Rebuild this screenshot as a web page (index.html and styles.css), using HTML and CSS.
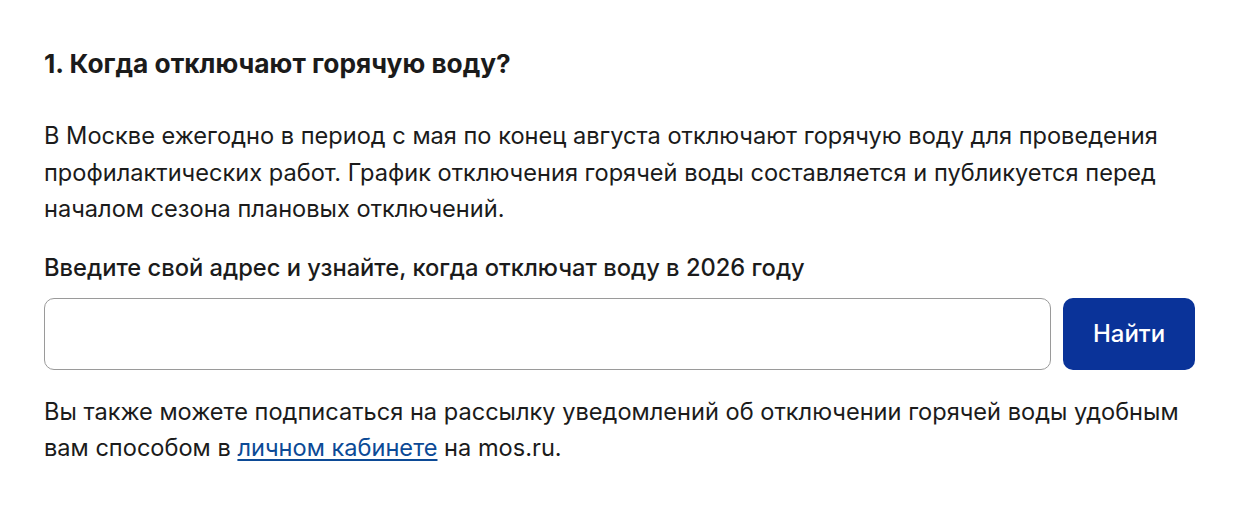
FILE: index.html
```html
<!DOCTYPE html>
<html lang="ru">
<head>
<meta charset="utf-8">
<link rel="stylesheet" href="styles.css">
</head>
<body>
<div class="page">
  <h2 class="title">1. Когда отключают горячую воду?</h2>
  <p class="text">В Москве ежегодно в период с мая по конец августа отключают горячую воду для проведения профилактических работ. График отключения горячей воды составляется и публикуется перед началом сезона плановых отключений.</p>
  <div class="label">Введите свой адрес и узнайте, когда отключат воду в 2026 году</div>
  <div class="search">
    <input class="field" type="text">
    <button class="btn">Найти</button>
  </div>
  <p class="text note">Вы также можете подписаться на рассылку уведомлений об отключении горячей воды удобным вам способом в <a href="#" class="link">личном кабинете</a> на mos.ru.</p>
</div>
</body>
</html>
```
FILE: styles.css
```css
* { box-sizing: border-box; }
html, body { margin: 0; padding: 0; background: #fff; }
body { font-family: Inter, "Noto Sans", sans-serif; color: #1b1b1b; }
.page { padding: 47px 44px 0 44px; width: 1239px; }
.title { margin: 0; font-size: 26.3px; font-weight: 700; line-height: 33px; }
.text { margin: 0; font-size: 23.6px; line-height: 36.5px; font-weight: 400; }
.page > .text:first-of-type { margin-top: 38px; }
.label { margin-top: 24px; font-size: 23.7px; font-weight: 500; line-height: 32px; }
.search { display: flex; gap: 12px; margin-top: 14px; }
.field { flex: 1; height: 72px; border: 1px solid #9a9a9a; border-radius: 10px; outline: none; font: inherit; }
.btn { width: 132px; height: 72px; background: #0a3399; color: #fff; border: none; border-radius: 10px; font-family: Inter, sans-serif; font-size: 24px; font-weight: 500; }
.note { margin-top: 24px; }
.link { color: #0c4a96; text-decoration: underline; text-underline-offset: 3px; }
```
